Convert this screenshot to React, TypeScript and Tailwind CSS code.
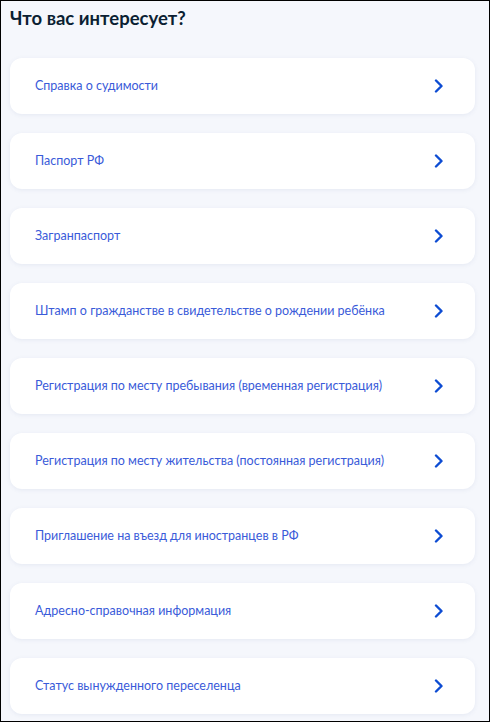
import React from "react";

const items = [
  "Справка о судимости",
  "Паспорт РФ",
  "Загранпаспорт",
  "Штамп о гражданстве в свидетельстве о рождении ребёнка",
  "Регистрация по месту пребывания (временная регистрация)",
  "Регистрация по месту жительства (постоянная регистрация)",
  "Приглашение на въезд для иностранцев в РФ",
  "Адресно-справочная информация",
  "Статус вынужденного переселенца",
];

function Chevron() {
  return (
    <svg width="10" height="14" viewBox="0 0 10 14" fill="none">
      <path
        d="M2 1.5 L7.5 7 L2 12.5"
        stroke="#0d4cd3"
        strokeWidth="2.4"
        strokeLinecap="round"
        strokeLinejoin="round"
      />
    </svg>
  );
}

export default function App() {
  return (
    <div
      className="w-[490px] h-[722px] overflow-hidden border border-black bg-[#f5f7fc]"
      style={{ fontFamily: "Lato, 'Noto Sans', sans-serif" }}
    >
      <div className="pl-[9px] pr-[14px]">
        <h1 className="pt-[4px] text-[18.5px] leading-[26px] font-bold text-[#0b1f33]">
          Что вас интересует?
        </h1>

        {/* список услуг */}
        <div className="mt-[27px] flex flex-col gap-[19px]">
          {items.map((t) => (
            <div
              key={t}
              className="flex h-[56px] items-center justify-between rounded-[12px] bg-white pl-[25px] pr-[31px] shadow-[0_1px_4px_rgba(90,110,160,0.10)]"
            >
              <span className="text-[12.5px] text-[#3a5bd9]">{t}</span>
              <Chevron />
            </div>
          ))}
        </div>
      </div>
    </div>
  );
}
